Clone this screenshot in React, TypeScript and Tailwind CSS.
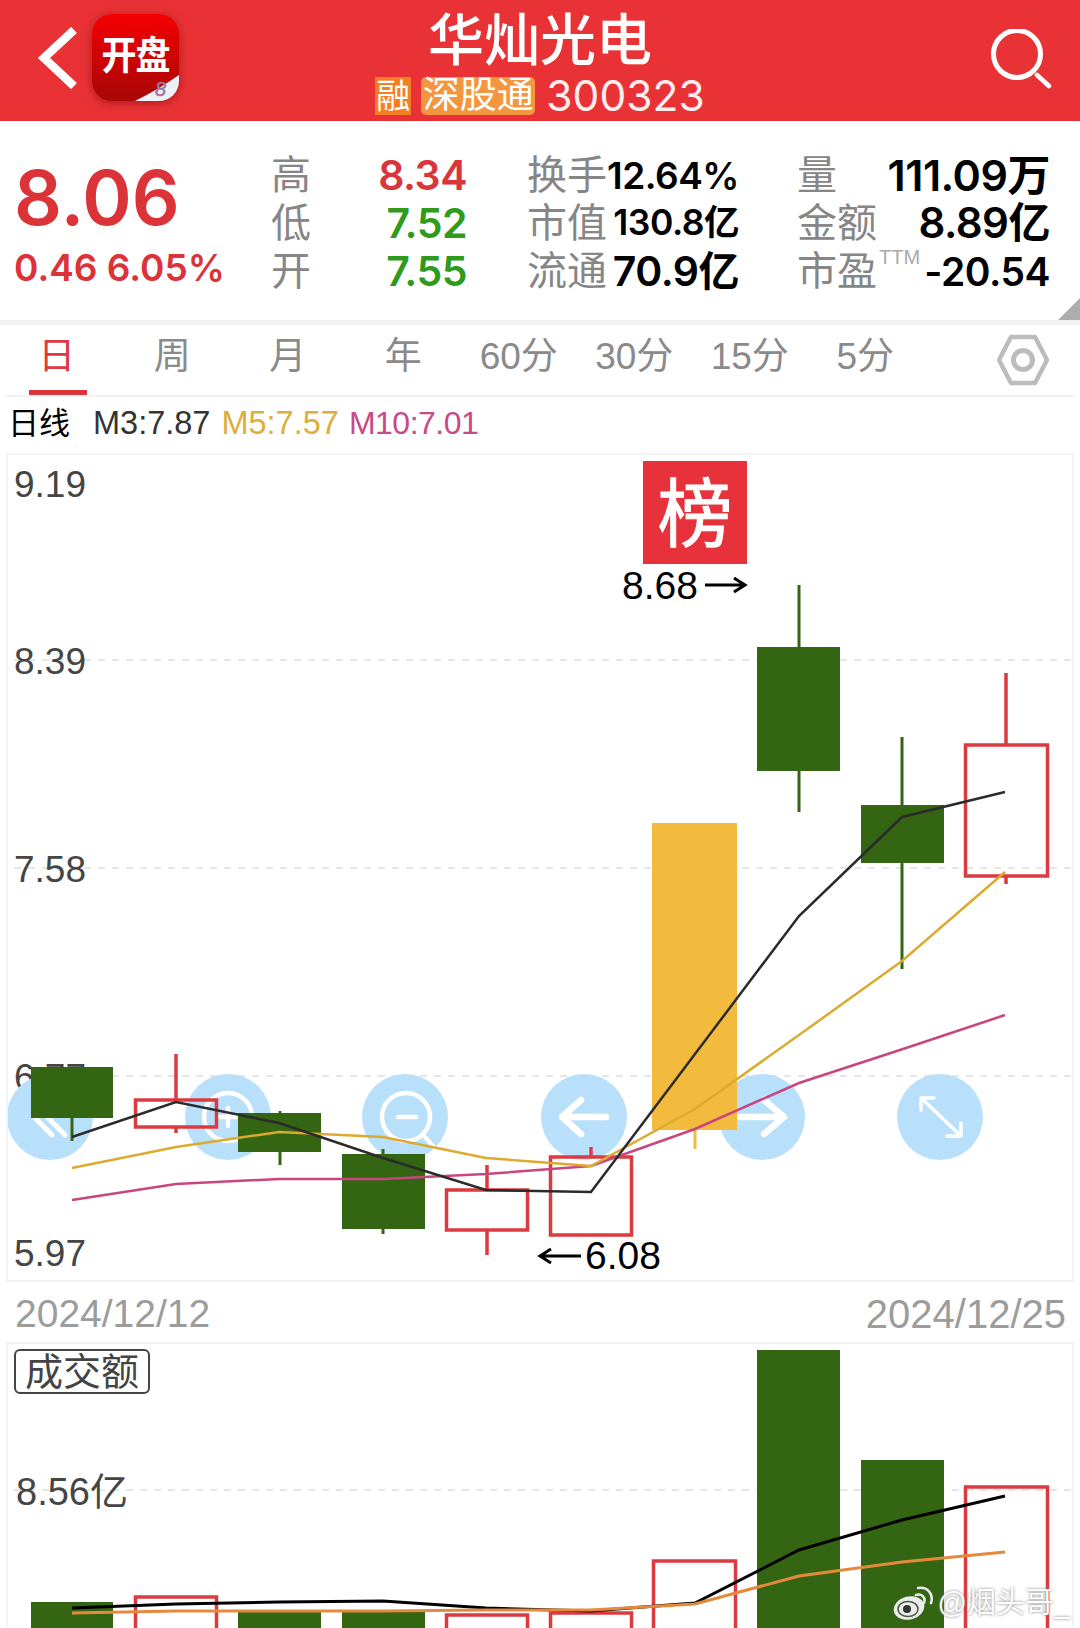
import React from 'react';

const candles = [
  { x: 72, left: 31, right: 113, top: 1067, bottom: 1118, high: 1067, low: 1141, kind: 'down' },
  { x: 176, left: 134, right: 218, top: 1100, bottom: 1127, high: 1054, low: 1133, kind: 'up' },
  { x: 280, left: 238, right: 321, top: 1113, bottom: 1152, high: 1111, low: 1165, kind: 'down' },
  { x: 383, left: 342, right: 425, top: 1154, bottom: 1229, high: 1149, low: 1234, kind: 'down' },
  { x: 487, left: 445, right: 529, top: 1190, bottom: 1230, high: 1165, low: 1255, kind: 'up' },
  { x: 591, left: 549, right: 633, top: 1157, bottom: 1235, high: 1147, low: 1235, kind: 'up' },
  { x: 695, left: 652, right: 737, top: 823, bottom: 1130, high: 823, low: 1149, kind: 'limit' },
  { x: 799, left: 757, right: 840, top: 647, bottom: 771, high: 585, low: 812, kind: 'down' },
  { x: 902, left: 861, right: 944, top: 805, bottom: 863, high: 737, low: 969, kind: 'down' },
  { x: 1006, left: 964, right: 1049, top: 745, bottom: 876, high: 673, low: 884, kind: 'up' },
];

const volumeTops = [1602, 1597, 1612, 1612, 1615, 1613, 1561, 1350, 1460, 1487];

const ma3 = '72,1137 176,1102 279,1123 383,1158 486,1190 591,1192 799,916 902,817 1005,792';
const ma5 = '72,1168 176,1147 279,1132 383,1137 486,1158 591,1166 695,1109 799,1035 902,961 1005,872';
const ma10 = '72,1200 176,1184 279,1179 383,1179 486,1174 591,1166 695,1129 799,1083 903,1049 1005,1015';
const volBlack = '72,1608 176,1604 279,1602 383,1601 486,1608 591,1611 695,1603 799,1550 902,1520 1005,1496';
const volOrange = '72,1613 176,1611 279,1611 383,1611 486,1610 591,1610 695,1604 799,1576 902,1562 1005,1552';

const GREEN = '#336512';
const RED = '#dc3a41';

const tabs = ['日', '周', '月', '年', '60分', '30分', '15分', '5分'];

const CandleChart = () => (
  <svg viewBox="8 455 1064 825" className="absolute inset-0 w-full h-full">
    {[660, 868, 1076].map(y => (
      <line key={y} x1="14" x2="1072" y1={y} y2={y} stroke="#dedede" strokeWidth="1.5" strokeDasharray="7 7" />
    ))}

    <g fill="#454545" fontSize="37">
      <text x="14" y="497">9.19</text>
      <text x="14" y="674">8.39</text>
      <text x="14" y="882">7.58</text>
      <text x="14" y="1090">6.77</text>
      <text x="14" y="1266">5.97</text>
    </g>

    <g fill="#b9e0fb">
      {[50, 228, 405, 584, 762, 940].map(cx => <circle key={cx} cx={cx} cy="1117" r="43" />)}
    </g>
    <g fill="none" stroke="#fff" strokeLinecap="round" strokeLinejoin="round">
      <path d="M53 1100 35 1118 52 1135M66 1100 48 1118 65 1135" strokeWidth="5" />
      <circle cx="228" cy="1117" r="24" strokeWidth="4.5" />
      <path d="M219 1117H237M228 1108V1126M245 1135 256 1147" strokeWidth="4.5" />
      <circle cx="406" cy="1117" r="24" strokeWidth="4.5" />
      <path d="M398 1117H416M423 1135 434 1147" strokeWidth="4.5" />
      <path d="M562 1117H606M581 1100 562 1117 581 1134" strokeWidth="6.5" />
      <path d="M740 1117H784M764 1100 784 1117 764 1134" strokeWidth="6.5" />
      <path d="M921 1098 961 1136M921 1110V1098H934M961 1123V1136H947" strokeWidth="3.5" />
    </g>

    {candles.map(c => {
      if (c.kind === 'up') {
        return (
          <g key={c.x} stroke={RED} strokeWidth="3.5">
            <line x1={c.x} x2={c.x} y1={c.high} y2={c.top} />
            <line x1={c.x} x2={c.x} y1={c.bottom} y2={c.low} />
            <rect x={c.left + 1.5} y={c.top} width={c.right - c.left - 3} height={c.bottom - c.top} fill="none" />
          </g>
        );
      }
      const color = c.kind === 'limit' ? '#f3bb3e' : GREEN;
      return (
        <g key={c.x}>
          <line x1={c.x} x2={c.x} y1={c.high} y2={c.low} stroke={color} strokeWidth="3" />
          <rect x={c.left} y={c.top} width={c.right - c.left} height={c.bottom - c.top} fill={color} />
        </g>
      );
    })}

    <g fill="none" strokeWidth="2.5">
      <polyline points={ma10} stroke="#c9457f" />
      <polyline points={ma5} stroke="#dcaa2e" />
      <polyline points={ma3} stroke="#2b2b2b" />
    </g>

    <rect x="643" y="461" width="104" height="103" fill="#e7313b" />
    <text x="695" y="541" fill="#fff" stroke="#fff" strokeWidth="1" fontSize="75" textAnchor="middle">榜</text>
    <text x="622" y="599" fill="#000" fontSize="39">8.68</text>
    <path d="M705 585H744M734 578 745 585 734 592" fill="none" stroke="#000" strokeWidth="3" />
    <text x="585" y="1269" fill="#000" fontSize="39">6.08</text>
    <path d="M581 1256H541M551 1249 540 1256 551 1263" fill="none" stroke="#000" strokeWidth="3" />
  </svg>
);

const VolumeChart = () => (
  <svg viewBox="8 1344 1064 284" className="absolute inset-0 w-full h-full">
    <line x1="14" x2="1072" y1="1490" y2="1490" stroke="#dedede" strokeWidth="1.5" strokeDasharray="7 7" />
    {candles.map((c, i) =>
      c.kind === 'down' ? (
        <rect key={c.x} x={c.left} y={volumeTops[i]} width={c.right - c.left} height={1640 - volumeTops[i]} fill={GREEN} />
      ) : (
        <rect
          key={c.x}
          x={c.left + 1.5}
          y={volumeTops[i]}
          width={c.right - c.left - 3}
          height={1640 - volumeTops[i]}
          fill="none"
          stroke={RED}
          strokeWidth="3.5"
        />
      ),
    )}
    <polyline points={volBlack} fill="none" stroke="#000" strokeWidth="3" />
    <polyline points={volOrange} fill="none" stroke="#e58a3c" strokeWidth="3" />
  </svg>
);

const Stat = ({ label, value, tone = 'text-black', size = 'text-[36px]', sup }: {
  label: string;
  value: string;
  tone?: string;
  size?: string;
  sup?: boolean;
}) => (
  <div className="flex items-center justify-between h-[48px] whitespace-nowrap">
    <span className="relative shrink-0 text-[40px] text-[#868686] leading-none">
      {label}
      {sup && <span className="absolute left-[82px] top-[-4px] text-[20px] text-[#a9a9a9] [font-family:'Liberation_Sans',sans-serif]">TTM</span>}
    </span>
    <span className={`shrink-0 [font-family:'Inter','Noto_Sans_CJK_SC',sans-serif] font-semibold leading-none tracking-[-0.5px] ${tone} ${size}`}>{value}</span>
  </div>
);

export default function App() {
  return (
    <div className="relative w-[1080px] h-[1628px] overflow-hidden bg-white flex flex-col [font-family:'Liberation_Sans','Noto_Sans_CJK_SC',sans-serif]">
      <header className="h-[121px] bg-[#e83236] flex shrink-0 items-center text-white">
        <div className="w-[200px] -mt-[6px] flex items-center pl-[38px]">
          <svg width="40" height="62" viewBox="0 0 40 62" fill="none" stroke="#fff" strokeWidth="8.5">
            <path d="M36 3 6 31 36 59" />
          </svg>
          <div className="relative ml-[14px] w-[87px] h-[87px] rounded-[20px] bg-gradient-to-b from-[#f50000] to-[#a80606] shadow-[0_2px_8px_rgba(120,0,0,0.5)] overflow-hidden flex items-start justify-center">
            <span className="mt-[24px] text-[35px] font-bold leading-none tracking-[-1px] scale-y-110">开盘</span>
            <svg className="absolute right-0 bottom-0" width="44" height="30" viewBox="0 0 44 30">
              <path d="M0 30 Q24 18 44 4V30Z" fill="#eef1f7" />
              <text x="20" y="25" fontSize="20" fontStyle="italic" fill="#5b86d8" stroke="#e2606a" strokeWidth="0.5">8</text>
            </svg>
          </div>
        </div>
        <div className="flex-1 flex flex-col items-center">
          <div className="text-[56px] leading-[58px] mt-[6px] font-medium">华灿光电</div>
          <div className="flex items-center h-[38px] mt-[7px]">
            <span className="w-[36px] h-[38px] bg-[#f47f22] text-[34px] leading-[38px] text-center">融</span>
            <span className="ml-[10px] w-[114px] h-[38px] bg-[#f4963f] rounded-[5px] text-[37px] leading-[38px] text-center">深股通</span>
            <span className="ml-[11px] text-[42.5px] leading-[38px] [font-family:'Inter',sans-serif] text-[#fdeeee]">300323</span>
          </div>
        </div>
        <div className="w-[200px] flex justify-end pr-[28px]">
          <svg width="64" height="64" viewBox="0 0 64 64" fill="none" stroke="#fff" strokeWidth="5">
            <circle cx="29" cy="25" r="23.5" />
            <path d="M49 46 61 57" strokeLinecap="round" strokeWidth="4.5" />
          </svg>
        </div>
      </header>

      <section className="relative h-[199px] shrink-0 flex">
        <div className="w-[271px] pl-[14px] pt-[38px] text-[#dc3338] [font-family:'Inter',sans-serif] font-semibold">
          <div className="text-[75px] leading-[78px]">8.06</div>
          <div className="text-[37px] leading-[40px] mt-[11px] whitespace-nowrap">0.46 6.05%</div>
        </div>
        <div className="flex pt-[30px]">
          <div className="w-[196px]">
            <Stat label="高" value="8.34" tone="text-[#d9363b]" size="text-[41px]" />
            <Stat label="低" value="7.52" tone="text-[#2f9a1c]" size="text-[41px]" />
            <Stat label="开" value="7.55" tone="text-[#2f9a1c]" size="text-[41px]" />
          </div>
          <div className="w-[212px] ml-[60px]">
            <Stat label="换手" value="12.64%" size="text-[37px]" />
            <Stat label="市值" value="130.8亿" size="text-[35.5px]" />
            <Stat label="流通" value="70.9亿" size="text-[41px]" />
          </div>
          <div className="w-[253px] ml-[58px]">
            <Stat label="量" value="111.09万" size="text-[43px]" />
            <Stat label="金额" value="8.89亿" size="text-[42px]" />
            <Stat label="市盈" value="-20.54" size="text-[39px]" sup />
          </div>
        </div>
        <div className="absolute right-0 bottom-0 w-[22px] h-[22px] bg-[#adadad] [clip-path:polygon(100%_0,100%_100%,0_100%)]" />
      </section>
      <div className="h-[5px] shrink-0 bg-[#f3f3f3]" />

      <nav className="relative h-[72px] shrink-0 mx-[6px] border-b-2 border-[#f2f2f2] flex items-start text-[37px] text-[#8a8a8a]">
        <div className="flex -ml-[7px]">
          {tabs.map((t, i) => (
            <div key={t} className="relative w-[115.5px] h-[70px] flex items-center justify-center pb-[6px]">
              <span className={i === 0 ? 'text-[#dc3a41]' : ''}>{t}</span>
              {i === 0 && <div className="absolute left-[30px] w-[58px] bottom-[0px] h-[5px] bg-[#d8363f]" />}
            </div>
          ))}
        </div>
        <svg className="ml-auto mr-[24px] mt-[8px]" width="54" height="54" viewBox="0 0 54 54" fill="none" stroke="#bcbcbc">
          <path d="M15 4H39L51 27 39 50H15L3 27Z" strokeWidth="4.5" strokeLinejoin="round" />
          <circle cx="27" cy="27" r="9.5" strokeWidth="5" />
        </svg>
      </nav>

      <div className="h-[56px] shrink-0 -mt-[2px] mb-[2px] flex items-center text-[32.5px] leading-none pl-[8px]">
        <span className="text-[31px] text-black">日线</span>
        <span className="ml-[23px] text-[#333]">M3:7.87</span>
        <span className="ml-[11px] text-[#dcae3a]">M5:7.57</span>
        <span className="ml-[10px] text-[32px] tracking-[-0.5px] text-[#c94a86]">M10:7.01</span>
      </div>

      <div className="relative h-[829px] shrink-0 mx-[6px] border-2 border-[#f3f3f3]">
        <CandleChart />
      </div>

      <div className="h-[60px] shrink-0 pt-[4px] flex items-center justify-between pl-[15px] pr-[14px] text-[#9c9c9c]">
        <span className="text-[39px]">2024/12/12</span>
        <span className="text-[40px]">2024/12/25</span>
      </div>

      <div className="relative flex-1 mx-[6px] border-2 border-b-0 border-[#f3f3f3]">
        <VolumeChart />
        <div className="absolute left-[6px] top-[5px] w-[136px] h-[45px] border-2 border-[#444] rounded-[6px] flex items-center justify-center text-[38px] leading-none text-[#444] bg-white">成交额</div>
        <div className="absolute left-[8px] top-[126px] text-[38px] leading-[44px] text-[#454545]">8.56亿</div>
      </div>

      <div className="absolute right-[10px] bottom-[8px] flex items-center gap-[4px] text-white">
        <svg width="40" height="34" viewBox="0 0 40 34">
          <ellipse cx="16" cy="22" rx="15.5" ry="11.5" fill="#ececec" transform="rotate(-14 16 22)" />
          <ellipse cx="15" cy="23" rx="10" ry="7.5" fill="none" stroke="#4a5a3c" strokeWidth="1.5" />
          <circle cx="14" cy="23" r="4" fill="#333" />
          <path d="M23 9C29 7 33 12 31 17M25 2C34 0 41 8 38 17" fill="none" stroke="#ececec" strokeWidth="2.5" strokeLinecap="round" />
        </svg>
        <span className="text-[29px] leading-none text-white [text-shadow:0_0_3px_#777]">@烟头哥_</span>
      </div>
    </div>
  );
}
